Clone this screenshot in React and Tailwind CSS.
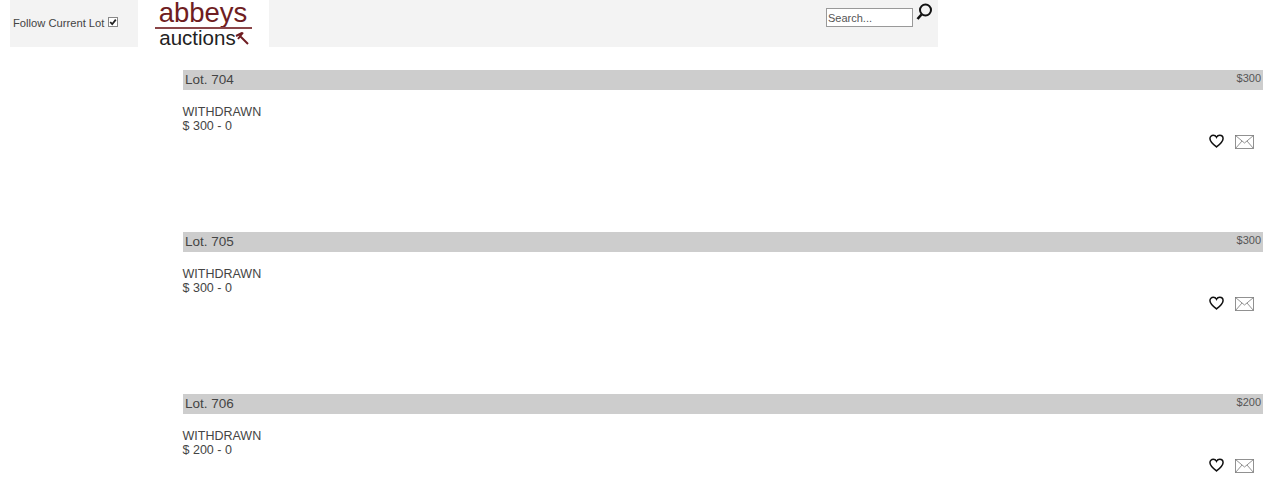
import React from 'react';

const lots = [
  { lot: 704, price: 300 },
  { lot: 705, price: 300 },
  { lot: 706, price: 200 },
];

function Logo() {
  return (
    <div className="w-[131px] h-[47px] bg-white ml-[19px] flex flex-col items-center">
      <div className="text-[#6f1d22] text-[27.5px] leading-[25px] -ml-px">abbeys</div>
      <div className="w-[97px] h-[2px] bg-[#8a4548] mt-[2px] shrink-0"></div>
      <div className="flex items-center text-[#222] text-[20.5px] leading-[17px] ml-[1px]">
        auctions
        <svg width="14" height="14" viewBox="0 0 14 14" className="-ml-[1px]">
          <path d="M1 5 L7 2 M3 8 L8 1.5 M5 5 L13 13" stroke="#6f1d22" strokeWidth="2" fill="none" />
        </svg>
      </div>
    </div>
  );
}

function LotRow({ lot, price }) {
  return (
    <div className="h-[162px]">
      <div className="h-5 bg-[#cdcdcd] flex justify-between pl-[2px] pr-[2px]">
        <span className="text-[13.5px] leading-[20px] text-[#444]">Lot. {lot}</span>
        <span className="text-[11px] leading-[16px] text-[#555]">${price}</span>
      </div>
      <div className="flex justify-between">
        <div className="mt-[15px] -ml-[0.5px] text-[12.5px] leading-[14px] text-[#444]">
          <div>WITHDRAWN</div>
          <div>$ {price} - 0</div>
        </div>
        <div className="flex items-center gap-[11px] mt-[43px] h-4 pr-[9px]">
          <svg width="15" height="14" viewBox="0 0 24 22" fill="none" stroke="#111" strokeWidth="2.4">
            <path d="M12 20.5 C5 15 1.5 11.5 1.5 7.3 C1.5 4 4 1.8 6.8 1.8 C9 1.8 11 3 12 5 C13 3 15 1.8 17.2 1.8 C20 1.8 22.5 4 22.5 7.3 C22.5 11.5 19 15 12 20.5 Z" />
          </svg>
          <svg width="19" height="14" viewBox="0 0 19 14" fill="none" stroke="#777" strokeWidth="0.8" className="mt-px">
            <rect x="0.5" y="0.5" width="18" height="13" />
            <path d="M0.5 0.5 L9.5 8 L18.5 0.5 M0.5 13.5 L7 6 M18.5 13.5 L12 6" />
          </svg>
        </div>
      </div>
    </div>
  );
}

export default function App() {
  return (
    <div className="font-['Liberation_Sans',Arial,sans-serif] bg-white h-[501px] overflow-hidden">
      <header className="ml-[10px] w-[928px] h-[47px] bg-[#f3f3f3] flex">
        <div className="w-[109px] flex items-center pl-[3px] text-[11.2px] text-[#444] whitespace-nowrap">
          Follow Current Lot
          <label className="relative w-[10px] h-[10px] ml-1 -mt-[3px] flex">
            <input type="checkbox" defaultChecked className="peer appearance-none w-[10px] h-[10px] bg-white border border-[#888]" />
            <svg width="10" height="10" viewBox="0 0 10 10" className="absolute left-0 top-0 hidden peer-checked:block" fill="none" stroke="#222" strokeWidth="1.8">
              <path d="M2.2 5 L4.2 7.2 L7.8 2.6" />
            </svg>
          </label>
        </div>
        <Logo />
        <div className="flex-1 flex items-start pl-[557px] pt-[2px]">
          <input placeholder="Search..." className="w-[87px] h-[19px] mt-[6px] bg-white border border-[#999] px-px text-[11px] placeholder:text-[#555]" />
          <svg width="20" height="20" viewBox="0 0 20 20" className="ml-[1px]" fill="none" stroke="#111">
            <circle cx="11.5" cy="8" r="5.5" strokeWidth="2" />
            <path d="M7.5 12.5 L3.5 17" strokeWidth="2.6" />
          </svg>
        </div>
      </header>
      <main className="ml-[183px] w-[1080px] mt-[23px]">
        {lots.map((l) => (
          <LotRow key={l.lot} lot={l.lot} price={l.price} />
        ))}
      </main>
    </div>
  );
}
